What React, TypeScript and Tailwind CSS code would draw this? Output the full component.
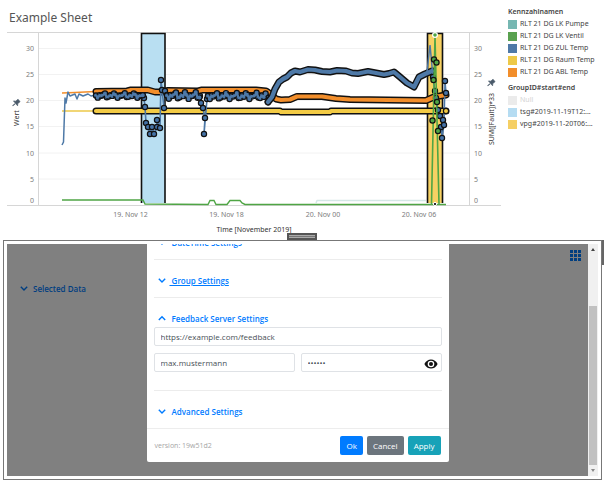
import { useState } from 'react';
import type { ReactNode } from 'react';

type Point = [number, number];

const line = (points: Point[]) => points.map((p) => p.join(',')).join(' ');

// Measurements that hover around a mean value, one marker every 1.8 units.
const noisy = (from: number, to: number, mean: number, spread: number): Point[] => {
  const out: Point[] = [];
  for (let x = from, i = 0; x <= to; x += 1.8, i += 1) {
    out.push([x, mean + spread * Math.sin(i * 1.7) * Math.cos(i * 0.57)]);
  }
  return out;
};

const ticks: [string, number][] = [
  ['30', 48.5],
  ['25', 74.5],
  ['20', 100.5],
  ['15', 126.5],
  ['10', 153],
  ['5', 179],
  ['0', 200],
];

const times: [string, number][] = [
  ['19. Nov 12', 130.5],
  ['19. Nov 18', 226.5],
  ['20. Nov 00', 323],
  ['20. Nov 06', 419],
];

const orange: Point[] = [
  [96, 91.5], [127, 91], [131, 90], [148, 90], [155, 92], [162, 92], [168, 90.5], [198, 91], [202, 90],
  [256, 90], [266, 91], [272, 95], [276, 99], [281, 100], [290, 99.5], [297, 96.5], [322, 96.5], [336, 98.5],
  [350, 99.5], [426, 100.5], [434, 97], [446, 95],
];

const yellow: Point[] = [[96, 111], [280, 111], [281, 112], [330, 112], [331, 111], [446, 111]];

const blueRise: Point[] = [
  [268, 102], [272, 97], [275, 89], [279, 82], [283, 79], [287, 77], [291, 73], [295, 71], [300, 72], [308, 69.5],
  [315, 70], [322, 71.5], [330, 72], [337, 70.5], [346, 71], [352, 73], [358, 73.5], [368, 71.5], [376, 73],
  [384, 74.5], [389, 73.5], [394, 72], [400, 77], [407, 83], [414, 87], [419, 77], [425, 74], [432, 71],
];

const denseRuns: Point[][] = [
  noisy(96, 143, 95.5, 2.6),
  noisy(167, 200, 95.5, 4),
  noisy(208, 266, 96, 3.6),
];

const sparseRuns: Point[][] = [
  [
    [143, 96], [144, 98], [145, 107], [146, 123], [148, 127], [150, 134], [152, 127], [154, 134], [157, 127],
    [157, 120], [160, 128], [161, 80], [164, 108], [162, 90], [165, 91], [167, 95],
  ],
  [[200, 96], [201, 103], [203, 108], [205, 118], [204, 134], [207, 99], [208, 95.5]],
  [[266, 96], [268, 102]],
];

const blueEnd: Point[] = [
  [433, 77], [435, 91], [436, 98], [438, 110], [440, 116], [443, 120], [441, 127], [442, 138], [444, 125],
  [445, 81], [446, 93],
];

const greenMarks: Point[] = [[434, 59.5], [436.5, 62.5], [433.5, 80], [437, 102], [432.5, 120.5], [438, 131]];

function Markers({ points, fill }: { points: Point[]; fill: string }) {
  return (
    <g fill={fill} stroke="#111" strokeWidth="1.2">
      {points.map(([x, y], i) => (
        <circle key={i} cx={x} cy={y} r="2.6" />
      ))}
    </g>
  );
}

function Band({ points, color }: { points: Point[]; color: string }) {
  return (
    <g fill="none" strokeLinecap="round" strokeLinejoin="round">
      <polyline points={line(points)} stroke="#111" strokeWidth="7" />
      <polyline points={line(points)} stroke={color} strokeWidth="4.2" />
    </g>
  );
}

function Pin({ x, y }: { x: number; y: number }) {
  return (
    <g transform={`translate(${x} ${y}) rotate(50)`} stroke="#4a5a6a" fill="#4a5a6a">
      <path d="M-1.600 -4h3.200v3l1.600 1.600h-6.400l1.600-1.600z" strokeWidth=".6" />
      <path d="M0 1v3.500" strokeWidth="1" />
    </g>
  );
}

function Chart() {
  return (
    <svg viewBox="0 26 504 208" className="block w-full font-['Noto_Sans','Open_Sans',sans-serif] text-[7px]" role="img" aria-label="Wert / Time">
      <g stroke="#f2f2f2">
        {ticks.slice(0, 6).map(([label, y]) => (
          <line key={label} x1="39" x2="469" y1={y} y2={y} />
        ))}
      </g>
      <g stroke="#d6d6d6">
        <line x1="7" x2="501" y1="32.5" y2="32.5" />
        <line x1="7" x2="501" y1="205.5" y2="205.5" />
        <line x1="38.5" x2="38.5" y1="32" y2="205" />
        <line x1="469.5" x2="469.5" y1="32" y2="205" />
      </g>
      <g fill="#7c7c7c">
        {ticks.map(([label, y]) => (
          <g key={label}>
            <text x="34" y={y + 2.5} textAnchor="end">{label}</text>
            <text x="474" y={y + 2.5}>{label}</text>
          </g>
        ))}
        {times.map(([label, x]) => (
          <text key={label} x={x} y="217" textAnchor="middle">{label}</text>
        ))}
      </g>
      <g fill="#333" textAnchor="middle">
        <text x="254" y="232">Time [November 2019]</text>
        <text transform="translate(19 118) rotate(-90)">Wert</text>
        <text transform="translate(494 119) rotate(-90)">SUM([Fault])*33</text>
      </g>
      <Pin x={16} y={103} />
      <Pin x={491} y={83} />

      <g strokeWidth="1.6" stroke="#111">
        <path d="M141.5 203V33.5H165V203" fill="#b9dff2" />
        <path d="M427.5 203V33.5H442.5V203" fill="#f7d163" />
      </g>

      <g fill="none" strokeWidth="1.5" strokeLinejoin="round">
        <polyline points="316,203 317,200.5 426,200.5" stroke="#d5e8e6" />
        <polyline points="62,93 75,92.5 85,92 96,91.5" stroke="#f28e2b" />
        <polyline points="62,111 96,111" stroke="#edc948" />
        <polyline
          points="62,145 63.5,142 65,98 66,103 68,92 70,96 75,94 77,99 79,94 83,96 88,94 91,96 96,95"
          stroke="#4e79a7"
        />
      </g>
      <polyline
        points="62,200 143,200 145,204 208,204.5 210,200.5 214,200.5 216,204.5 227,204.5 230,200.5 240,200.5 242,203 245,204.5 446,204.5"
        fill="none"
        stroke="#4fa545"
        strokeWidth="1.4"
      />

      <Band points={orange} color="#f28e2b" />
      <Band points={yellow} color="#f3cb45" />
      {sparseRuns.map((run, i) => (
        <g key={i}>
          <polyline points={line(run)} fill="none" stroke="#4e79a7" strokeWidth="1.6" />
          <Markers points={run} fill="#4573a8" />
        </g>
      ))}
      {denseRuns.map((run, i) => (
        <g key={i}>
          <Markers points={run} fill="#4573a8" />
          <polyline points={line(run)} fill="none" stroke="#4e79a7" strokeWidth="2.4" strokeLinejoin="round" strokeLinecap="round" />
        </g>
      ))}
      <Band points={blueRise} color="#4e79a7" />

      <polyline points={'427,72 430,45 433,77 ' + line(blueEnd)} fill="none" stroke="#4e79a7" strokeWidth="1.5" />
      <Markers points={blueEnd} fill="#4573a8" />
      <Markers points={[[446, 111]]} fill="#f3cb45" />
      <polyline points="431.5,204 435,36 439,204" fill="none" stroke="#4fa545" strokeWidth="1.6" />
      <Markers points={greenMarks} fill="#4fa545" />
      <circle cx="435" cy="35" r="2.4" fill="#4fa545" stroke="#fff" strokeWidth="1.2" />
      <circle cx="435" cy="204" r="1.6" fill="#111" stroke="#fff" />
    </svg>
  );
}

function Legend({ title, items }: { title: string; items: { label: string; swatch: string; muted?: boolean }[] }) {
  return (
    <section>
      <h2 className="font-semibold">{title}</h2>
      <ul>
        {items.map((item) => (
          <li key={item.label} className="flex items-center gap-[3px] whitespace-nowrap">
            <span className={`size-[9px] shrink-0 ${item.swatch}`} />
            <span className={item.muted ? 'text-[#d4d4d4]' : ''}>{item.label}</span>
          </li>
        ))}
      </ul>
    </section>
  );
}

function Chevron({ up = false }: { up?: boolean }) {
  return (
    <svg viewBox="0 0 8 8" className="size-2 shrink-0" fill="none" stroke="currentColor" strokeWidth="1.4" aria-hidden="true">
      <path d={up ? 'M.8 5L4 1.8 7.2 5' : 'M.8 1.8L4 5 7.2 1.8'} />
    </svg>
  );
}

function Section({ title, open = false, underlined = false, children }: { title: string; open?: boolean; underlined?: boolean; children?: ReactNode }) {
  return (
    <section className={`border-b border-[#ececec] pt-[13px] last:border-b-0 ${open ? 'pb-[18px]' : 'pb-2'}`}>
      <button type="button" aria-expanded={open} className="flex h-4 items-center gap-1 pl-1 font-semibold text-[#007bff]">
        <Chevron up={open} />
        <span className={`whitespace-pre ${underlined ? 'underline' : ''}`}>{' ' + title}</span>
      </button>
      {children}
    </section>
  );
}

const field = 'h-[19px] w-full rounded-[2px] border border-[#dfe2e6] bg-white px-1.5 text-[#495057] outline-none';

function SettingsDialog() {
  const [url, setUrl] = useState('https://example.com/feedback');
  const [user, setUser] = useState('max.mustermann');
  const [password, setPassword] = useState('secret');
  const [visible, setVisible] = useState(false);

  return (
    <div role="dialog" aria-label="Settings" className="w-[302px] shrink-0 rounded-b-[2px] bg-white">
      <div className="px-[7px]">
        <Section title="DateTime Settings" />
        <Section title="Group Settings" underlined />
        <Section title="Feedback Server Settings" open>
          <input aria-label="Server URL" className={field} value={url} onChange={(e) => setUrl(e.target.value)} />
          <div className="mt-[7px] flex gap-1.5">
            <div className="flex-1">
              <input aria-label="User name" className={field} value={user} onChange={(e) => setUser(e.target.value)} />
            </div>
            <div className="relative flex-1">
              <input
                aria-label="Password"
                type={visible ? 'text' : 'password'}
                className={field}
                value={password}
                onChange={(e) => setPassword(e.target.value)}
              />
              <button type="button" aria-label="Show password" onClick={() => setVisible(!visible)} className="absolute top-[5px] right-1">
                <svg viewBox="0 0 14 12" className="h-3 w-3.5">
                  <path d="M.4 6C1.8 3 4.2 1.4 7 1.4S12.200 3 13.600 6C12.200 9 9.800 10.600 7 10.600S1.800 9 .4 6z" fill="#111" />
                  <circle cx="7" cy="6" r="3.300" fill="#fff" />
                  <circle cx="7" cy="6" r="2" fill="#111" />
                </svg>
              </button>
            </div>
          </div>
        </Section>
        <Section title="Advanced Settings" />
      </div>
      <footer className="flex h-[34px] items-center gap-1 border-t border-[#ededed] px-2 text-white">
        <span className="flex-1 text-[7px] text-[#a5a5a5]">version: 19w51d2</span>
        <button type="button" className="h-[19px] rounded-[2px] bg-[#007bff] px-1.5">Ok</button>
        <button type="button" className="h-[19px] rounded-[2px] bg-[#6c757d] px-1.5">Cancel</button>
        <button type="button" className="h-[19px] rounded-[2px] bg-[#17a2b8] px-1.5">Apply</button>
      </footer>
    </div>
  );
}

export default function App() {
  return (
    <div className="min-h-screen bg-white leading-3">
      <header className="flex font-['Noto_Sans','Open_Sans',sans-serif] text-[7px] leading-3 text-[#444]">
        <div className="min-w-0 flex-1">
          <h1 className="h-[26px] pt-2 pl-[9px] text-[12px] leading-5 text-[#555]">Example Sheet</h1>
          <Chart />
        </div>
        <aside className="flex w-[100px] shrink-0 flex-col gap-1 overflow-hidden pt-1.5 pl-1">
          <Legend
            title="Kennzahlnamen"
            items={[
              { label: 'RLT 21 DG LK Pumpe', swatch: 'bg-[#76b7b2]' },
              { label: 'RLT 21 DG LK Ventil', swatch: 'bg-[#59a14f]' },
              { label: 'RLT 21 DG ZUL Temp', swatch: 'bg-[#4e79a7]' },
              { label: 'RLT 21 DG Raum Temp', swatch: 'bg-[#edc948]' },
              { label: 'RLT 21 DG ABL Temp', swatch: 'bg-[#f28e2b]' },
            ]}
          />
          <Legend
            title="GroupID#start#end"
            items={[
              { label: 'Null', swatch: 'bg-[#ebebeb]', muted: true },
              { label: 'tsg#2019-11-19T12:...', swatch: 'bg-[#b5dcf2]' },
              { label: 'vpg#2019-11-20T06:...', swatch: 'bg-[#f5cf64]' },
            ]}
          />
        </aside>
      </header>

      <div className="relative z-10 -mt-px flex justify-center">
        <div className="h-[7px] w-[30px] border-2 border-[#555] bg-[#aaa]">
          <div className="mt-px h-px bg-[#777]" />
        </div>
      </div>

      <div className="flex pl-[3px] font-['Open_Sans','Noto_Sans',sans-serif] text-[8px] leading-3">
        <main className="flex h-60 min-w-0 flex-1 border border-[#777] p-[3px]">
          <div className="relative min-w-0 flex-1 bg-[#808080] text-[#003e80]">
            <div className="flex justify-end pt-1.5 pr-[7px]">
              <button type="button" aria-label="Menu" className="grid grid-cols-3 gap-px">
                {Array.from({ length: 9 }, (_, i) => (
                  <span key={i} className="size-[3px] bg-current" />
                ))}
              </button>
            </div>
            <button type="button" className="mt-5 flex h-4 items-center gap-[5px] pl-[13px] font-semibold">
              <Chevron />
              Selected Data
            </button>
            <div className="absolute inset-0 flex items-end justify-center overflow-hidden pb-3.5">
              <SettingsDialog />
            </div>
          </div>
          <div className="flex w-2.5 flex-col items-center bg-[#f0f0f0] py-1" aria-hidden="true">
            <svg viewBox="0 0 4 3" className="h-[3px] w-1"><path d="M0 3L2 0 4 3z" fill="#444" /></svg>
            <div className="mt-[55px] w-2 flex-1 bg-[#c1c1c1]" />
            <svg viewBox="0 0 4 3" className="mt-1 h-[3px] w-1"><path d="M0 0L2 3 4 0z" fill="#888" /></svg>
          </div>
        </main>
        <div className="h-[25px] w-0.5 bg-[#666]" />
      </div>
    </div>
  );
}
